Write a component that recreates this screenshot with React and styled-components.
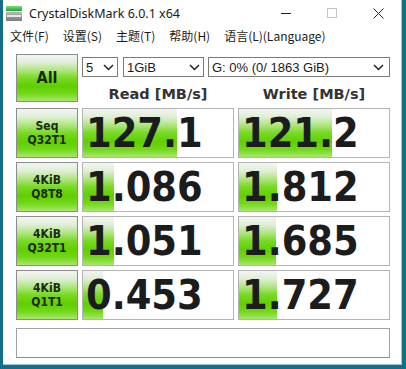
import React from "react";
import styled, { createGlobalStyle } from "styled-components";

const Global = createGlobalStyle`
  html, body { margin: 0; padding: 0; background: #146e86; }
  body { width: 406px; height: 369px; overflow: hidden; }
  #root { width: 406px; height: 369px; }
`;

const Window = styled.div`
  margin-left: 3px;
  width: 399px;
  height: 365px;
  box-sizing: border-box;
  background: #ffffff;
  border-right: 1px solid #9cc9d8;
  border-bottom: 1px solid #9cc9d8;
  display: flex;
  flex-direction: column;
`;

const TitleBar = styled.div`
  height: 26px;
  display: flex;
  align-items: center;
  padding-left: 2px;
`;

const TitleText = styled.span`
  margin-left: 6px;
  font-family: "Noto Sans", "Segoe UI", sans-serif;
  font-size: 12.5px;
  color: #1a1a1a;
  flex: 1;
`;

const CaptionButton = styled.div`
  width: 46px;
  height: 26px;
  display: flex;
  align-items: center;
  justify-content: center;
`;

const MenuBar = styled.div`
  height: 18px;
  display: flex;
  align-items: center;
`;

const MenuItem = styled.span`
  padding: 0 7px;
  font-family: "Noto Sans CJK SC", "Microsoft YaHei", sans-serif;
  font-size: 12px;
  color: #1a1a1a;
`;

const Content = styled.div`
  padding: 10px 0 0 13px;
  display: flex;
  flex-direction: column;
`;

const Grid = styled.div`
  display: grid;
  grid-template-columns: 62px 152px 152px;
  grid-auto-rows: 50px;
  gap: 4px;
`;

const greenGradient = `linear-gradient(to bottom,
  #f3f5f1 0%, #e0eed8 16%, #b0e682 33%, #78d924 50%, #60cf00 68%, #72d718 84%, #a6e86c 100%)`;

const LabelButton = styled.div`
  box-sizing: border-box;
  height: ${(p) => (p.$tall ? "48px" : "50px")};
  border: 1px solid #8c8c8c;
  background: ${greenGradient};
  display: flex;
  flex-direction: column;
  align-items: center;
  justify-content: center;
  font-family: "DejaVu Sans Condensed", "DejaVu Sans", sans-serif;
  font-stretch: condensed;
  font-weight: bold;
  font-size: ${(p) => (p.$big ? "16px" : "12px")};
  line-height: 14px;
  color: #1c2a14;
`;

const HeaderCell = styled.div`
  grid-column: 2 / 4;
  display: flex;
  flex-direction: column;
`;

const ComboRow = styled.div`
  margin-top: 3px;
  display: flex;
`;

const Combo = styled.div`
  box-sizing: border-box;
  width: ${(p) => p.$w}px;
  margin-left: ${(p) => p.$ml || 0}px;
  height: 20px;
  border: 1px solid #7a7a7a;
  background: #fff;
  display: flex;
  align-items: center;
  justify-content: space-between;
  padding: 0 ${(p) => p.$pr || 3}px 0 3px;
  font-family: "Liberation Sans", Arial, sans-serif;
  font-size: 13px;
  color: #1a1a1a;
`;

const HeadRow = styled.div`
  margin-top: 7px;
  display: grid;
  grid-template-columns: 152px 152px;
  gap: 4px;
`;

const HeadText = styled.div`
  text-align: center;
  font-family: "DejaVu Sans", Verdana, sans-serif;
  font-weight: bold;
  font-size: 14.5px;
  line-height: 20px;
  color: #333333;
`;

const ResultBox = styled.div`
  box-sizing: border-box;
  border: 1px solid #b4b4b4;
  background-color: #ffffff;
  background-image: ${greenGradient};
  background-repeat: no-repeat;
  display: flex;
  align-items: center;
  padding-left: 3px;
  font-family: "DejaVu Sans Condensed", "DejaVu Sans", sans-serif;
  font-stretch: condensed;
  font-weight: bold;
  font-size: 41px;
  color: #1c1c1c;
`;

const StatusBar = styled.div`
  margin-top: 8px;
  width: 374px;
  height: 30px;
  box-sizing: border-box;
  border: 1px solid #a2a2a2;
  border-bottom-color: #8a8a8a;
  background: #fff;
`;

const Chevron = () => (
  <svg width="11" height="7" viewBox="0 0 11 7">
    <path d="M1 1 L5.5 5.5 L10 1" fill="none" stroke="#222" strokeWidth="1.5" />
  </svg>
);

const AppIcon = () => (
  <svg width="18" height="17" viewBox="0 0 18 17">
    <defs>
      <linearGradient id="gt" x1="0" y1="0" x2="0" y2="1">
        <stop offset="0" stopColor="#7fe07a" />
        <stop offset="1" stopColor="#1f9e3a" />
      </linearGradient>
      <linearGradient id="gb" x1="0" y1="0" x2="0" y2="1">
        <stop offset="0" stopColor="#b8b8b8" />
        <stop offset="1" stopColor="#7c7c7c" />
      </linearGradient>
    </defs>
    <rect x="1" y="1" width="16" height="5" fill="url(#gt)" />
    <rect x="1" y="7" width="16" height="9" fill="url(#gb)" />
    <rect x="2" y="10" width="14" height="2" fill="#e8e8e8" />
  </svg>
);

const rows = [
  { l1: "Seq", l2: "Q32T1", r: "127.1", rw: 94, w: "121.2", ww: 93 },
  { l1: "4KiB", l2: "Q8T8", r: "1.086", rw: 31, w: "1.812", ww: 38 },
  { l1: "4KiB", l2: "Q32T1", r: "1.051", rw: 31, w: "1.685", ww: 37 },
  { l1: "4KiB", l2: "Q1T1", r: "0.453", rw: 20, w: "1.727", ww: 38 },
];

export default function App() {
  return (
    <>
      <Global />
      <Window>
        <TitleBar>
          <AppIcon />
          <TitleText>CrystalDiskMark 6.0.1 x64</TitleText>
          <CaptionButton>
            <svg width="10" height="10" viewBox="0 0 10 10">
              <path d="M0 5.5 H10" stroke="#222" strokeWidth="1" />
            </svg>
          </CaptionButton>
          <CaptionButton>
            <svg width="10" height="10" viewBox="0 0 10 10">
              <rect x="0.5" y="0.5" width="9" height="9" fill="none" stroke="#c4c4c4" strokeWidth="1" />
            </svg>
          </CaptionButton>
          <CaptionButton>
            <svg width="11" height="11" viewBox="0 0 11 11">
              <path d="M0.5 0.5 L10.5 10.5 M10.5 0.5 L0.5 10.5" stroke="#222" strokeWidth="1" />
            </svg>
          </CaptionButton>
        </TitleBar>
        <MenuBar>
          <MenuItem>文件(F)</MenuItem>
          <MenuItem>设置(S)</MenuItem>
          <MenuItem>主题(T)</MenuItem>
          <MenuItem>帮助(H)</MenuItem>
          <MenuItem>语言(L)(Language)</MenuItem>
        </MenuBar>
        <Content>
          <Grid>
            <LabelButton $tall $big>All</LabelButton>
            <HeaderCell>
              <ComboRow>
                <Combo $w={36}>
                  <span>5</span>
                  <Chevron />
                </Combo>
                <Combo $w={81} $ml={5}>
                  <span>1GiB</span>
                  <Chevron />
                </Combo>
                <Combo $w={182} $ml={4} $pr={5}>
                  <span>G: 0% (0/ 1863 GiB)</span>
                  <Chevron />
                </Combo>
              </ComboRow>
              <HeadRow>
                <HeadText>Read [MB/s]</HeadText>
                <HeadText>Write [MB/s]</HeadText>
              </HeadRow>
            </HeaderCell>
            {rows.map((r, i) => (
              <React.Fragment key={i}>
                <LabelButton>
                  <span>{r.l1}</span>
                  <span>{r.l2}</span>
                </LabelButton>
                <ResultBox style={{ backgroundSize: `${r.rw}px 100%` }}>{r.r}</ResultBox>
                <ResultBox style={{ backgroundSize: `${r.ww}px 100%` }}>{r.w}</ResultBox>
              </React.Fragment>
            ))}
          </Grid>
          <StatusBar />
        </Content>
      </Window>
    </>
  );
}
